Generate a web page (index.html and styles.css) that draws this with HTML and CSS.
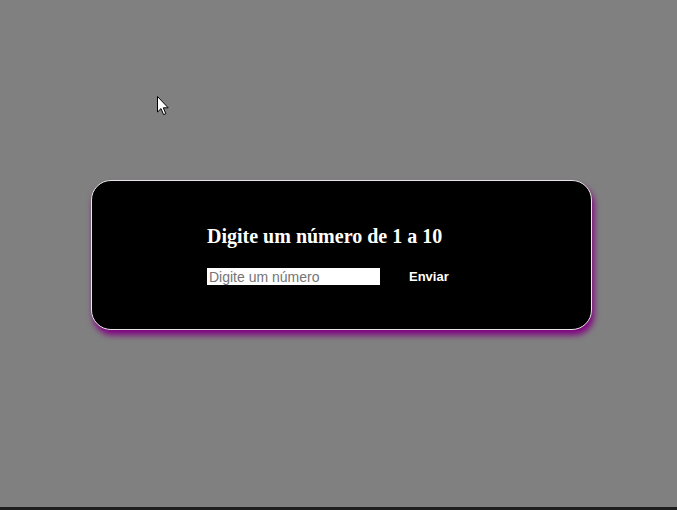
FILE: index.html
```html
<!DOCTYPE html>
<html lang="pt">
<head>
<meta charset="utf-8">
<title>Jogo</title>
<link rel="stylesheet" href="styles.css">
</head>
<body>
<main class="stage">
  <section class="card">
    <h1 class="title">Digite um número de 1 a 10</h1>
    <form class="row" onsubmit="return false">
      <input class="field" type="text" placeholder="Digite um número">
      <button class="send" type="submit">Enviar</button>
    </form>
  </section>
</main>
<svg class="cursor" width="13" height="20" viewBox="0 0 13 20" aria-hidden="true">
  <path d="M0.5 0.5 L0.5 16 L4 12.6 L6.6 18.6 L8.8 17.7 L6.3 11.8 L11.2 11.8 Z" fill="#fff" stroke="#000" stroke-width="1"/>
</svg>
<div class="taskbar"></div>
</body>
</html>
```
FILE: styles.css
```css
html, body {
  margin: 0;
  padding: 0;
  height: 100%;
}
body {
  background: #808080;
  overflow: hidden;
  position: relative;
}
.stage {
  padding-top: 180px;
  padding-left: 91px;
}
.card {
  box-sizing: border-box;
  width: 501px;
  height: 150px;
  background: #000;
  border: 1px solid #e6e6e6;
  border-radius: 20px;
  box-shadow: 2px 5px 6px #800080;
  padding: 43px 0 0 115px;
}
.title {
  margin: 0;
  font-family: "Liberation Serif", "Times New Roman", serif;
  font-weight: bold;
  font-size: 20px;
  line-height: 24px;
  color: #fff;
}
.row {
  display: flex;
  align-items: center;
  margin-top: 20px;
}
.field {
  box-sizing: border-box;
  width: 173px;
  height: 17px;
  border: 0;
  padding: 0 2px;
  margin: 0;
  background: #fff;
  font-family: "Liberation Sans", Arial, sans-serif;
  font-size: 14px;
  outline: none;
}
.field::placeholder {
  color: #757575;
}
.send {
  margin-left: 29px;
  padding: 0;
  border: 0;
  background: transparent;
  color: #fff;
  font-family: "Liberation Sans", Arial, sans-serif;
  font-weight: bold;
  font-size: 13px;
}
.cursor {
  position: absolute;
  left: 157px;
  top: 96px;
}
.taskbar {
  position: absolute;
  left: 0;
  right: 0;
  bottom: 0;
  height: 3px;
  background: #1e1e1e;
}
```
